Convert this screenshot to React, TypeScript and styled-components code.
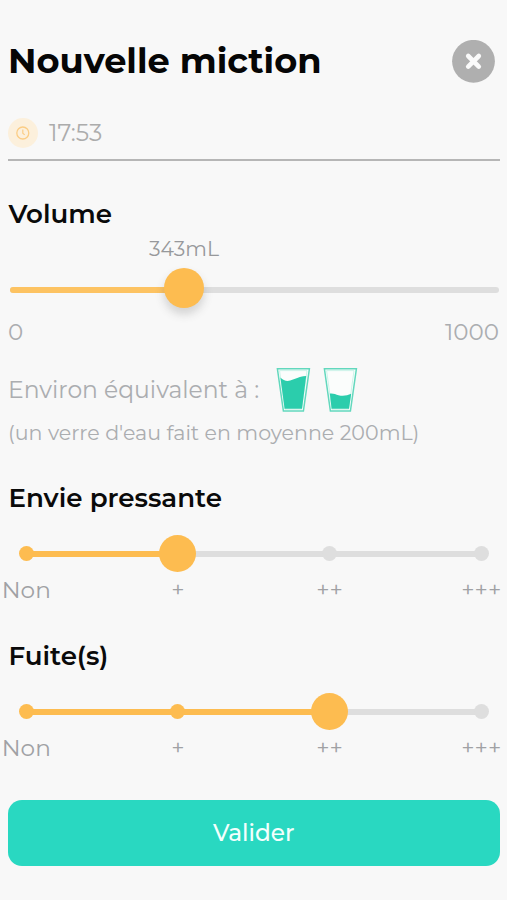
import React from "react";
import styled, { createGlobalStyle } from "styled-components";

const amber = "#fdbc50";
const rail = "#dedede";
const teal = "#29d8c1";

const GlobalStyle = createGlobalStyle`
  *, *::before, *::after { box-sizing: border-box; }
  body {
    margin: 0;
    background: #f8f8f8;
    font-family: Montserrat, Inter, sans-serif;
    overflow: hidden;
  }
`;

const Screen = styled.main`
  display: flex;
  flex-direction: column;
  width: 507px;
  height: 900px;
  padding: 39px 8px 0;
  background: #f8f8f8;
`;

const Header = styled.header`
  display: flex;
  align-items: center;
  justify-content: space-between;
  height: 44px;
  padding-right: 4px;
`;

const Title = styled.h1`
  margin: 0;
  color: #060606;
  font-size: 35.2px;
  font-weight: 700;
  line-height: 44px;
  white-space: nowrap;
`;

const CloseButton = styled.button`
  display: flex;
  padding: 0;
  border: 0;
  background: none;
`;

const TimeField = styled.div`
  display: flex;
  align-items: center;
  gap: 11px;
  width: 491.5px;
  height: 56px;
  margin-top: 22px;
  padding-top: 2px;
  border-bottom: 2px solid #b6b6b6;
`;

const TimeValue = styled.span`
  color: #acacac;
  font-size: 23.5px;
  font-weight: 400;
  line-height: 30px;
`;

const SectionTitle = styled.h2<{ $top: number }>`
  margin: ${(p) => p.$top}px 0 0 0.5px;
  color: #0a0a0a;
  font-size: 26.1px;
  font-weight: 600;
  line-height: 34px;
`;

const Slider = styled.div`
  display: flex;
  flex-direction: column;
  width: 491px;
`;

const SliderValue = styled.output`
  align-self: flex-start;
  width: 80px;
  margin: 5px 0 0 136px;
  color: #97989b;
  font-size: 20.4px;
  font-weight: 400;
  line-height: 26px;
  text-align: center;
`;

const SliderTrack = styled.div`
  display: flex;
  align-items: center;
  height: 6px;
  margin: 25px 0 0 1.5px;
  border-radius: 3px;
  background: ${rail};
`;

const SliderFill = styled.div`
  width: 174px;
  height: 6px;
  border-radius: 3px;
  background: #fdc362;
`;

const SliderThumb = styled.div`
  flex: none;
  width: 40px;
  height: 40px;
  margin: -4px 0 0 -20px;
  border-radius: 50%;
  background: ${amber};
  box-shadow: 0 6px 10px rgba(60, 60, 60, 0.2);
`;

const SliderBounds = styled.div`
  display: flex;
  justify-content: space-between;
  margin-top: 24px;
  color: #abadb0;
  font-size: 23px;
  font-weight: 400;
  line-height: 30px;
`;

const Equivalence = styled.div`
  display: flex;
  align-items: center;
  height: 46px;
  margin-top: 20px;
`;

const EquivalenceText = styled.span`
  width: 268px;
  color: #abadb0;
  font-size: 23.45px;
  font-weight: 400;
  line-height: 30px;
  white-space: nowrap;
`;

const Glasses = styled.div`
  display: flex;
  gap: 12px;
`;

const Note = styled.p`
  margin: 5.5px 0 0;
  color: #abadb0;
  font-size: 20.6px;
  font-weight: 400;
  line-height: 28px;
  white-space: nowrap;
`;

const StepTrack = styled.div<{ $top: number }>`
  display: flex;
  align-items: center;
  height: 38px;
  margin: ${(p) => p.$top}px 0 0 18.3px;
`;

const Stop = styled.div`
  display: flex;
  align-items: center;
  justify-content: center;
  width: 0;
  z-index: 1;
`;

const Dot = styled.div<{ $active: boolean; $current: boolean }>`
  flex: none;
  width: ${(p) => (p.$current ? 37 : 15)}px;
  height: ${(p) => (p.$current ? 37 : 15)}px;
  border-radius: 50%;
  background: ${(p) => (p.$active ? amber : rail)};
`;

const Segment = styled.div<{ $active: boolean }>`
  width: 151.7px;
  height: 6px;
  background: ${(p) => (p.$active ? amber : rail)};
`;

const StepLabels = styled.div`
  display: flex;
  justify-content: space-between;
  width: 455px;
  margin: 2px 0 0 18.3px;
`;

const LabelSlot = styled.div`
  display: flex;
  justify-content: center;
  width: 0;
`;

const StepLabel = styled.span`
  flex: none;
  color: #a0a1a4;
  font-size: 23.2px;
  font-weight: 400;
  line-height: 30px;
`;

const SubmitButton = styled.button`
  width: 491.5px;
  height: 66px;
  margin-top: 37.5px;
  padding: 0;
  border: 0;
  border-radius: 14px;
  background: ${teal};
  color: #f4fffd;
  font-family: inherit;
  font-size: 23.2px;
  font-weight: 500;
  line-height: 30px;
`;

const CloseIcon = () => (
  <svg width="43" height="43" viewBox="0 0 43 43">
    <circle cx="21.5" cy="21.3" r="21.4" fill="#afafaf" />
    <path d="M16.2 16l10.6 10.6M26.8 16L16.2 26.6" stroke="#fafafa" strokeWidth="4.6" strokeLinecap="round" />
  </svg>
);

const ClockIcon = () => (
  <svg width="30" height="30" viewBox="0 0 30 30" fill="none">
    <circle cx="15" cy="15" r="15" fill="#fcf0dc" />
    <circle cx="14.8" cy="15" r="6" stroke="#fbcd85" strokeWidth="1.3" />
    <path d="M14.8 11.4v3.9l1.9 1.6" stroke="#fbcd85" strokeWidth="1.2" />
  </svg>
);

const Glass = ({ water }: { water: string }) => (
  <svg width="35" height="46" viewBox="0 0 35 46" fill="none">
    <path d="M1.4 1.8H33.4L27.4 44H7.4Z" fill="#fbfdfc" stroke="#62d8bd" strokeWidth="1.5" />
    <path d="M3.6 3.6H31L25.7 42.2H8.9Z" stroke="#b9efe1" strokeWidth="0.7" />
    <path d={water} fill="#2bcdac" />
  </svg>
);

const FULL = "M4.4 10.5C8 14.2 12 14.8 17 12.6C22 10.4 26 9.2 30.2 9L26 41.8H8.6Z";
const QUARTER = "M6.8 26.6C10 26 12.5 27.4 15.5 28.2C19.5 29.2 24 28.8 28.2 26.8L26 41.8H8.6Z";

const LABELS = ["Non", "+", "++", "+++"];

const StepSlider = ({ value, top }: { value: number; top: number }) => (
  <>
    <StepTrack $top={top}>
      {LABELS.map((label, i) => (
        <React.Fragment key={label}>
          {i > 0 && <Segment $active={i <= value} />}
          <Stop>
            <Dot $active={i <= value} $current={i === value} />
          </Stop>
        </React.Fragment>
      ))}
    </StepTrack>
    <StepLabels>
      {LABELS.map((label) => (
        <LabelSlot key={label}>
          <StepLabel>{label}</StepLabel>
        </LabelSlot>
      ))}
    </StepLabels>
  </>
);

export default function App() {
  return (
    <>
      <GlobalStyle />
      <Screen>
        <Header>
          <Title>Nouvelle miction</Title>
          <CloseButton aria-label="Fermer">
            <CloseIcon />
          </CloseButton>
        </Header>
        <TimeField>
          <ClockIcon />
          <TimeValue>17:53</TimeValue>
        </TimeField>

        <SectionTitle $top={36}>Volume</SectionTitle>
        <Slider>
          <SliderValue>343mL</SliderValue>
          <SliderTrack>
            <SliderFill />
            <SliderThumb />
          </SliderTrack>
          <SliderBounds>
            <span>0</span>
            <span>1000</span>
          </SliderBounds>
        </Slider>
        <Equivalence>
          <EquivalenceText>Environ équivalent à :</EquivalenceText>
          <Glasses>
            <Glass water={FULL} />
            <Glass water={QUARTER} />
          </Glasses>
        </Equivalence>
        <Note>(un verre d'eau fait en moyenne 200mL)</Note>

        <SectionTitle $top={34}>Envie pressante</SectionTitle>
        <StepSlider value={1} top={20} />

        <SectionTitle $top={34}>Fuite(s)</SectionTitle>
        <StepSlider value={2} top={20} />

        <SubmitButton>Valider</SubmitButton>
      </Screen>
    </>
  );
}
